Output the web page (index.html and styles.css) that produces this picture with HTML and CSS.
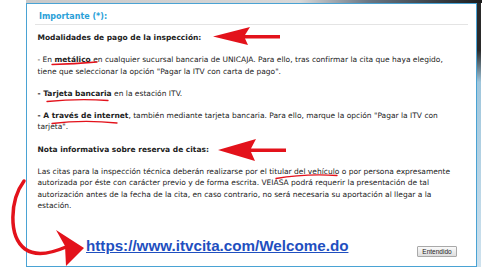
FILE: index.html
```html
<!DOCTYPE html>
<html lang="es">
<head>
    <meta charset="UTF-8">
    <meta name="viewport" content="width=device-width, initial-scale=1.0">
    <title>Importante - ITV cita</title>
    <link rel="stylesheet" href="styles.css">
</head>
<body>
    <div class="screen">
        <div class="topStrip"></div>
        <div class="stage">
            <div class="dialog">
                <div class="dialogTitle">Importante (*):</div>
                <div class="dialogBody">
                    <p><b>Modalidades de pago de la inspección:</b></p>
                    <p>- En <b>metálico</b> en cualquier sucursal bancaria de UNICAJA. Para ello, tras confirmar la cita que haya elegido, tiene que seleccionar la opción "Pagar la ITV con carta de pago".</p>
                    <p><b>- Tarjeta bancaria</b> en la estación ITV.</p>
                    <p><b>- A través de internet</b>, también mediante tarjeta bancaria. Para ello, marque la opción "Pagar la ITV con tarjeta".</p>
                    <p><b>Nota informativa sobre reserva de citas:</b></p>
                    <p>Las citas para la inspección técnica deberán realizarse por el titular del vehículo o por persona expresamente autorizada por éste con carácter previo y de forma escrita. VEIASA podrá requerir la presentación de tal autorización antes de la fecha de la cita, en caso contrario, no será necesaria su aportación al llegar a la estación.</p>
                </div>
                <div class="dialogFoot">
                    <a class="siteLink" href="#">https://www.itvcita.com/Welcome.do</a>
                    <button type="button" class="okButton">Entendido</button>
                </div>
            </div>
            <div class="sideStrip"></div>
        </div>

        <!-- red hand-drawn notes on top of the screenshot -->
        <svg class="marks" width="504" height="269" viewBox="0 0 504 269">
            <g fill="#e3121b">
                <polygon points="213,36.5 250,27 245,35 280,35 280,38.5 245,38.5 248,45"/>
                <polygon points="218,150 256,139 251,148.5 286,148.5 286,152 251,152 255,161"/>
                <polygon points="84,248 56,230 65,246 66,266"/>
            </g>
            <g fill="none" stroke="#e3121b" stroke-linecap="round">
                <path d="M52 64.5 Q74 64 97 62" stroke-width="1.3"/>
                <path d="M47 101.5 Q78 98.5 108 100.5" stroke-width="1.3"/>
                <path d="M52 123.5 Q84 119.5 117 123" stroke-width="1.3"/>
                <path d="M276 178.5 Q305 173.5 337 175.5" stroke-width="1.3"/>
                <path d="M24 181 C10 200, 8 236, 25 249 C36 257, 52 253, 66 247" stroke-width="3.5"/>
            </g>
        </svg>
    </div>
</body>
</html>
```

FILE: styles.css
```css
body {
    margin: 0;
    background: #ffffff;
    font-family: "DejaVu Sans", Verdana, sans-serif;
}

.screen {
    position: relative;
    width: 504px;
    height: 269px;
    overflow: hidden;
}

.topStrip {
    height: 3px;
    margin-left: 26px;
    width: 456px;
    background: linear-gradient(90deg, #c9c9c9 0%, #d8d8d8 60%, #6b7784 75%, #3a3f45 90%, #1c1c1c 100%);
}

.stage {
    display: flex;
}

.dialog {
    box-sizing: border-box;
    width: 451px;
    height: 264px;
    margin-left: 26px;
    border: 1.5px solid #4aa3d4;
    background: #ffffff;
    display: flex;
    flex-direction: column;
}

.sideStrip {
    width: 4px;
    height: 264px;
    background: linear-gradient(180deg, #2a2a2a 0%, #2a2a2a 18%, #9fc6dc 30%, #cfe2ee 100%);
}

.dialogTitle {
    margin: 0 8px;
    padding: 7px 0 1.5px 4px;
    border-bottom: 1px solid #e4e4e4;
    color: #2a9fd8;
    font-size: 8px;
    font-weight: bold;
    line-height: 11px;
}

.dialogBody {
    padding: 7.5px 18px 0 10.5px;
    color: #222222;
    font-size: 7.5px;
    line-height: 11.3px;
}

.dialogBody p {
    margin: 0 0 11px 0;
}

.dialogFoot {
    margin-top: auto;
    display: flex;
    justify-content: space-between;
    align-items: flex-end;
    padding: 0 19px 9px 59px;
}

.siteLink {
    margin-bottom: 3px;
    color: #1f4fc0;
    font-family: "Liberation Sans", Arial, sans-serif;
    font-size: 15.2px;
    font-weight: bold;
    line-height: 17px;
}

.okButton {
    box-sizing: border-box;
    width: 40px;
    height: 11px;
    padding: 0;
    border: 1px solid #a9a9a9;
    border-radius: 1px;
    background: linear-gradient(180deg, #fafafa, #dedede);
    color: #222222;
    font-family: "Liberation Sans", Arial, sans-serif;
    font-size: 6.5px;
    line-height: 9px;
}

.marks {
    position: absolute;
    left: 0;
    top: 0;
    pointer-events: none;
}
```
